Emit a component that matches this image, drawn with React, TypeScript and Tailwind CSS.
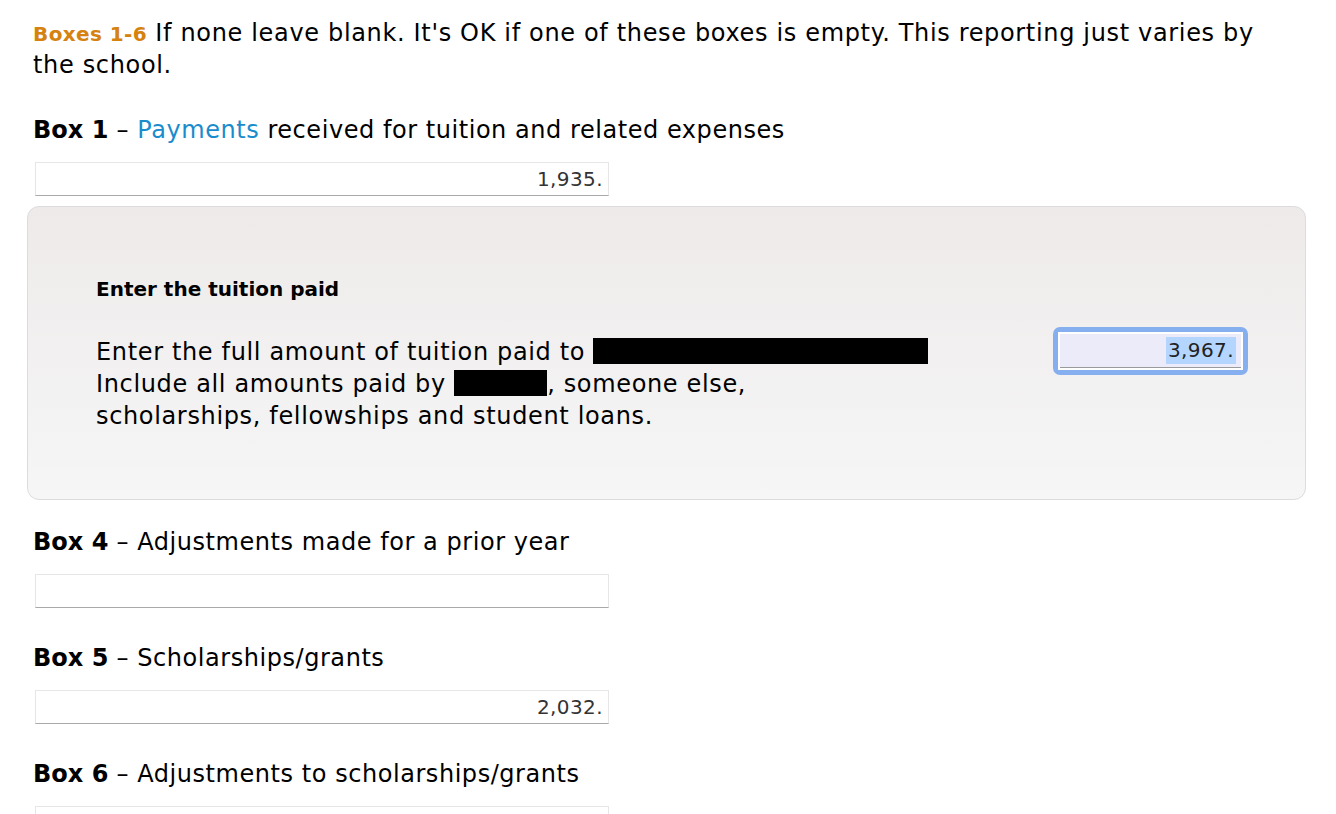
const font = { fontFamily: '"DejaVu Sans", Verdana, sans-serif' };

function AmountField({ value }: { value?: string }) {
  return (
    <div className="ml-[2px] w-[574px] h-[34px] bg-white border border-[#e6e6e6] border-b-[#a9a9a9] flex items-center justify-end pr-[5px] text-[20px] tracking-[0.4px] text-[#333]">
      {value}
    </div>
  );
}

function BoxLabel({ n, children }: { n: number; children: React.ReactNode }) {
  return (
    <div className="h-[32px] leading-[32px] text-[24px] text-black whitespace-nowrap">
      <span className="font-bold">Box {n}</span>
      <span className="tracking-[0.55px]"> – {children}</span>
    </div>
  );
}

function Redacted({ w }: { w: number }) {
  return (
    <span
      className="inline-block align-[-4px] h-[26px] bg-black"
      style={{ width: w }}
    />
  );
}

export default function App() {
  return (
    <div className="min-h-screen bg-white pl-[33px] pt-[18px]" style={font}>
      {/* Intro */}
      <p className="text-[24px] leading-[31px] text-black w-[1280px] tracking-[0.66px]">
        <span className="font-bold text-[20px] tracking-[0.4px] text-[#d5820f]">Boxes 1-6</span> If none leave blank. It's OK if one of these
        boxes is empty. This reporting just varies by
        <br />
        the school.
      </p>

      {/* Box 1 */}
      <div className="mt-[33px]">
        <BoxLabel n={1}>
          <span className="text-[#1a8ccc]">Payments</span> received for tuition and related expenses
        </BoxLabel>
        <div className="mt-[16px]">
          <AmountField value="1,935." />
        </div>
      </div>

      {/* Tuition panel */}
      <div className="-ml-[6px] mt-[10px] w-[1279px] h-[294px] rounded-[12px] border border-[#dcdcdc] bg-gradient-to-b from-[#eeeaea] to-[#f6f6f6] pl-[68px] pr-[57px] pt-[68px]">
        <div className="h-[28px] leading-[28px] text-[20px] font-bold text-black">Enter the tuition paid</div>
        <div className="mt-[33px] flex justify-between items-start">
          <p className="text-[24px] leading-[32px] text-black tracking-[0.65px]">
            Enter the full amount of tuition paid to <Redacted w={335} />
            <br />
            Include all amounts paid by <Redacted w={93} />, someone else,
            <br />
            scholarships, fellowships and student loans.
          </p>
          <div className="shrink-0 -mt-[9px] rounded-[7px] bg-[#86aff0] p-[5px]">
            <div className="bg-white p-[2px]">
              <div className="w-[181px] h-[34px] bg-[#ebebfa] border-b border-[#9a9a9a] flex items-center justify-end pr-[5px] text-[20px] tracking-[0.4px] text-[#222]">
                <span className="bg-[#b4d5fe] px-[2px] leading-[27px]">3,967.</span>
              </div>
            </div>
          </div>
        </div>
      </div>

      {/* Box 4 */}
      <div className="mt-[26px]">
        <BoxLabel n={4}>Adjustments made for a prior year</BoxLabel>
        <div className="mt-[16px]">
          <AmountField />
        </div>
      </div>

      {/* Box 5 */}
      <div className="mt-[34px]">
        <BoxLabel n={5}>Scholarships/grants</BoxLabel>
        <div className="mt-[16px]">
          <AmountField value="2,032." />
        </div>
      </div>

      {/* Box 6 */}
      <div className="mt-[34px]">
        <BoxLabel n={6}>Adjustments to scholarships/grants</BoxLabel>
        <div className="mt-[16px]">
          <AmountField />
        </div>
      </div>
    </div>
  );
}
